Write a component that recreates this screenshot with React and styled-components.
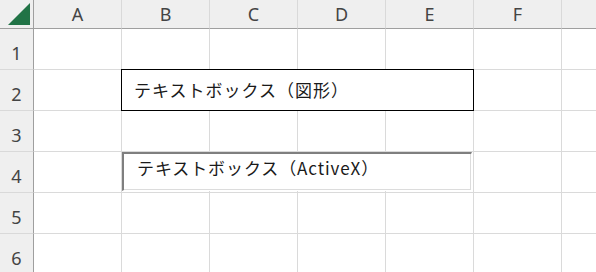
import React from 'react';
import styled, { createGlobalStyle } from 'styled-components';

const GlobalStyle = createGlobalStyle`
  html, body {
    margin: 0;
    padding: 0;
    background: #ffffff;
    overflow: hidden;
  }
`;

const COLS = ['A', 'B', 'C', 'D', 'E', 'F', ''];
const ROWS = [1, 2, 3, 4, 5, 6];

const Sheet = styled.div`
  position: relative;
  display: grid;
  grid-template-columns: 34px repeat(7, 88px);
  grid-template-rows: 29px repeat(6, 41px);
  width: 596px;
  height: 272px;
  overflow: hidden;
  font-family: "Noto Sans", "Liberation Sans", sans-serif;
`;

const Corner = styled.div`
  box-sizing: border-box;
  background: #efefef;
  border-right: 1px solid #9f9f9f;
  border-bottom: 1px solid #9f9f9f;
  display: flex;
  align-items: flex-end;
  justify-content: flex-end;
  padding: 0 3px 3px 0;
  svg {
    display: block;
  }
`;

const ColHeader = styled.div`
  box-sizing: border-box;
  background: #efefef;
  border-right: 1px solid #d9d9d9;
  border-bottom: 1px solid #9f9f9f;
  display: flex;
  align-items: center;
  justify-content: center;
  font-size: 18px;
  color: #444444;
`;

const RowHeader = styled.div`
  box-sizing: border-box;
  background: #efefef;
  border-right: 1px solid #9f9f9f;
  border-bottom: 1px solid #d9d9d9;
  display: flex;
  align-items: flex-end;
  justify-content: center;
  padding-bottom: 4px;
  font-size: 18px;
  color: #444444;
`;

const Cell = styled.div`
  box-sizing: border-box;
  background: #ffffff;
  border-right: 1px solid #dadada;
  border-bottom: 1px solid #dadada;
`;

const ShapeBox = styled.div`
  position: absolute;
  left: 121px;
  top: 69px;
  width: 353px;
  height: 42px;
  box-sizing: border-box;
  border: 1px solid #000000;
  background: #ffffff;
  display: flex;
  align-items: center;
  padding: 0 0 1px 12px;
  font-family: "Noto Sans CJK JP", sans-serif;
  font-size: 17px;
  letter-spacing: 1px;
  color: #1a1a1a;
`;

const ActiveXBox = styled.div`
  position: absolute;
  left: 122px;
  top: 152px;
  width: 350px;
  height: 39px;
  box-sizing: border-box;
  border-top: 2px solid #7f7f7f;
  border-left: 2px solid #7f7f7f;
  border-right: 1px solid #ffffff;
  border-bottom: 1px solid #ffffff;
  box-shadow: inset -1px -1px 0 #dcdcdc;
  background: #ffffff;
  padding: 3px 0 0 13px;
  font-family: "Noto Sans CJK JP", sans-serif;
  font-size: 17px;
  letter-spacing: 0.9px;
  line-height: 22px;
  color: #1a1a1a;
`;

function SelectAll() {
  return (
    <svg width="22" height="22" viewBox="0 0 22 22">
      <polygon points="22,0 22,22 0,22" fill="#217346" />
    </svg>
  );
}

export default function App() {
  return (
    <>
      <GlobalStyle />
      <Sheet>
        <Corner>
          <SelectAll />
        </Corner>
        {COLS.map((c, i) => (
          <ColHeader key={'h' + i}>{c}</ColHeader>
        ))}
        {ROWS.map((r) => (
          <React.Fragment key={r}>
            <RowHeader>{r}</RowHeader>
            {COLS.map((c, i) => (
              <Cell key={r + '-' + i} />
            ))}
          </React.Fragment>
        ))}
        <ShapeBox>テキストボックス（図形）</ShapeBox>
        <ActiveXBox>テキストボックス（ActiveX）</ActiveXBox>
      </Sheet>
    </>
  );
}
